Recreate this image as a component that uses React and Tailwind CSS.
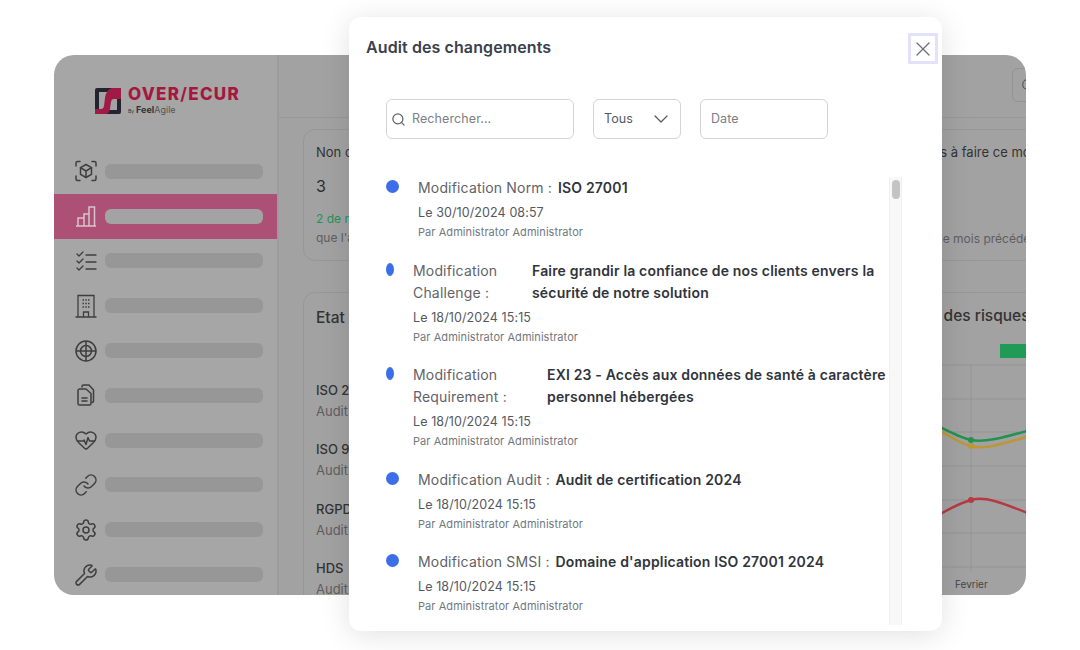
import { ChevronDown, HeartPulse, Link, Search, Settings, Wrench, X } from 'lucide-react';

const ScanBoxIcon = () => (
  <svg width="24" height="24" viewBox="0 0 24 24" fill="none" stroke="currentColor" strokeWidth="1.5" strokeLinecap="round" strokeLinejoin="round">
    <path d="M2 7V4a1.5 1.5 0 0 1 1.5-1.5H6M18 2.500h2.500A1.500 1.500 0 0 1 22 4v3M22 17v3a1.500 1.500 0 0 1-1.500 1.500H18M6 21.500H3.500A1.500 1.500 0 0 1 2 20v-3" />
    <path d="M12 5.500l5.500 3.200v6.600L12 18.500l-5.500-3.200V8.700z" />
    <path d="M6.500 8.700L12 12l5.500-3.300M12 12v6.500" />
  </svg>
);

const BarsIcon = () => (
  <svg width="24" height="24" viewBox="0 0 24 24" fill="none" stroke="currentColor" strokeWidth="1.500">
    <path d="M2 22h20M4 22v-8h6v8M10 22v-12h5v12M15 22V3h5.500v19" />
  </svg>
);

const ChecksIcon = () => (
  <svg width="24" height="24" viewBox="0 0 24 24" fill="none" stroke="currentColor" strokeWidth="1.300" strokeLinecap="round" strokeLinejoin="round">
    <path d="M3 5l2 2 4-4M3 12l2 2 4-4M3 19l2 2 4-4" />
    <path d="M12 6h10M12 13h10M12 20h10" />
  </svg>
);

const BuildingIcon = () => (
  <svg width="24" height="24" viewBox="0 0 24 24" fill="none" stroke="currentColor" strokeWidth="1.300">
    <path d="M1.500 23h21M4 23V1.500h16V23M9.500 23v-5h5v5" />
    <path d="M8.500 6h1.500M11.300 6h1.500M14 6h1.500M8.500 9.500h1.500M11.300 9.500h1.500M14 9.500h1.500M8.500 13h1.500M11.300 13h1.500M14 13h1.500" />
  </svg>
);

const TargetIcon = () => (
  <svg width="24" height="24" viewBox="0 0 24 24" fill="none" stroke="currentColor" strokeWidth="1.500">
    <circle cx="12" cy="12" r="10" />
    <circle cx="12" cy="12" r="5.500" />
    <path d="M12 2v20M2 12h20" />
  </svg>
);

const FilesIcon = () => (
  <svg width="24" height="24" viewBox="0 0 24 24" fill="none" stroke="currentColor" strokeWidth="1.500" strokeLinejoin="round" strokeLinecap="round">
    <path d="M8 4V3.500A1.500 1.500 0 0 1 9.500 2H15l4.500 5v11a1.500 1.500 0 0 1-1.500 1.500" />
    <path d="M4 7.500A1.500 1.500 0 0 1 5.500 6H12l5 4.500v10a1.500 1.500 0 0 1-1.500 1.500h-10A1.500 1.500 0 0 1 4 20.500z" />
    <path d="M8 15h5M8 18h5" />
  </svg>
);

const sidebarIcons = [
  <ScanBoxIcon />,
  <BarsIcon />,
  <ChecksIcon />,
  <BuildingIcon />,
  <TargetIcon />,
  <FilesIcon />,
  <HeartPulse size={24} strokeWidth={1.5} />,
  <Link size={24} strokeWidth={1.5} />,
  <Settings size={24} strokeWidth={1.5} />,
  <Wrench size={24} strokeWidth={1.5} />,
];

const Logo = () => (
  <div className="flex items-center gap-[7px] pl-[41px] h-[94px] pb-[3px]">
    <svg width="26" height="26" viewBox="0 0 26 26">
      <rect width="26" height="26" rx="2" fill="#23242f" />
      <rect x="4" y="4" width="18" height="18" fill="#a3a3a3" />
      <path d="M26 0v11h-7c-2 0-2.500 1-3 3l-1 7c-.5 3-2 5-5 5H0v-5h6c2 0 2.500-1 3-3l1-8c.5-4 3-10 8-10z" fill="#a11a47" />
    </svg>
    <div className="flex flex-col pt-[1px]">
      <div className="text-[17px] leading-[17px] font-extrabold text-[#a5173f] tracking-[1.300px] font-['Inter',sans-serif]">
        OVER<span className="font-bold">/</span>ECUR
      </div>
      <div className="flex items-baseline text-[9px] leading-[11px] text-[#333] mt-[1px]">
        <span className="text-[5px] mr-[2px]">By</span>
        <span className="font-bold">Feel</span>
        <span className="text-[#555]">Agile</span>
      </div>
    </div>
  </div>
);

const Sidebar = () => (
  <div className="w-[225px] shrink-0 bg-[#a6a6a6] border-r-2 border-[#9c9c9c]">
    <Logo />
    {sidebarIcons.map((icon, i) => (
      <div key={i} className={`flex items-center h-[44.800px] pl-[20px] text-[#3e3e3e] ${i === 1 ? 'bg-[#ad5075] text-[#d9c3cc]' : ''}`}>
        <div className="w-[24px] flex justify-center">{icon}</div>
        <div className={`ml-[7px] w-[158px] h-[15px] rounded-md ${i === 1 ? 'bg-[#a3a3a3]' : 'bg-[#979797]'}`} />
      </div>
    ))}
  </div>
);

const audits = [
  { name: 'ISO 27001', mt: 'mt-[54px]' },
  { name: 'ISO 9001', mt: 'mt-[22.300px]' },
  { name: 'RGPD', mt: 'mt-[22.300px]' },
  { name: 'HDS', mt: 'mt-[22.300px]' },
];

const RiskChart = () => (
  <svg width="143" height="220" viewBox="883 361 143 220" className="absolute left-[24px] top-[68px]">
    {[365, 399, 432, 466, 500, 533, 567].map((y) => (
      <line key={y} x1="883" x2="1026" y1={y} y2={y} stroke="#949494" strokeWidth="1" />
    ))}
    <line x1="971" x2="971" y1="365" y2="572" stroke="#949494" strokeWidth="1" />
    <path d="M930 422C950 432 960 438 971 440C985 443 1005 437 1030 430" fill="none" stroke="#22934f" strokeWidth="2.500" />
    <path d="M930 425C950 436 960 444 971 446C985 450 1005 443 1030 436" fill="none" stroke="#bd9638" strokeWidth="2.500" />
    <path d="M930 520C950 508 960 503 971 500C985 496 1000 502 1030 514" fill="none" stroke="#b53a41" strokeWidth="2.500" />
    <circle cx="971" cy="440" r="3" fill="#22934f" />
    <circle cx="971" cy="446" r="3" fill="#bd9638" />
    <circle cx="971" cy="500" r="3" fill="#b53a41" />
  </svg>
);

const Main = () => (
  <div className="flex-1 min-w-0 overflow-hidden bg-[#a2a2a2] font-['Inter',sans-serif]">
    <div className="h-[63px] border-b border-[#979797] flex justify-end overflow-hidden">
      <div className="ml-auto mt-[13px] mr-[-60px] w-[74px] h-[34px] rounded-md border border-[#939393] flex items-center pl-[8px]">
        <Search size={14} className="text-[#555]" />
      </div>
    </div>
    <div className="flex gap-[20px] pl-[24px] pt-[11px] w-[1000px]">
      <div className="w-[563px] h-[132px] shrink-0 rounded-xl border border-[#979797] px-[12px] pt-[14px]">
        <div className="text-[13px] leading-[17px] text-[#333]">Non conformités</div>
        <div className="text-[16px] leading-[20px] text-[#2c2c2c] mt-[15px]">3</div>
        <div className="text-[12px] leading-[17px] text-[#1f9355] mt-[14px]">2 de retard</div>
        <div className="text-[12px] leading-[17px] text-[#5e5e5e] mt-[2px]">que l'audit</div>
      </div>
      <div className="w-[300px] h-[132px] shrink-0 rounded-xl border border-[#979797] pl-[14px] pt-[14px]">
        <div className="text-[13px] leading-[17px] text-[#333]">Actions à faire ce mois</div>
        <div className="ml-[14px] text-[12px] leading-[17px] text-[#5e5e5e] mt-[69px]">que le mois précédent</div>
      </div>
    </div>
    <div className="flex gap-[20px] pl-[24px] pt-[31px] w-[1000px]">
      <div className="w-[535px] h-[320px] shrink-0 rounded-xl border border-[#979797] px-[12px] pt-[15px]">
        <div className="text-[15.500px] leading-[20px] font-medium text-[#333]">Etat des</div>
        {audits.map((a) => (
          <div key={a.name} className={a.mt}>
            <div className="text-[13px] leading-[16px] font-medium text-[#333]">{a.name}</div>
            <div className="text-[13px] leading-[16px] text-[#5e5e5e] mt-[5px]">Audit</div>
          </div>
        ))}
      </div>
      <div className="relative w-[300px] h-[320px] shrink-0 rounded-xl border border-[#979797] pl-[12px] pt-[13px]">
        <div className="text-[15.500px] leading-[20px] font-medium text-[#333]">Evolution des risques</div>
        <div className="absolute left-[141px] top-[51px] w-[60px] h-[14px] bg-[#1f9a57]" />
        <RiskChart />
        <div className="absolute left-[96px] top-[284px] text-[10px] leading-[14px] text-[#444]">Fevrier</div>
      </div>
    </div>
  </div>
);

const changes = [
  { dot: 'w-[13px]', label: 'Modification Norm :', labelW: 'w-[140px]', value: 'ISO 27001', date: 'Le 30/10/2024 08:57' },
  { dot: 'w-[8px]', label: 'Modification Challenge :', labelW: 'w-[119px]', value: 'Faire grandir la confiance de nos clients envers la sécurité de notre solution', date: 'Le 18/10/2024 15:15' },
  { dot: 'w-[8px]', label: 'Modification Requirement :', labelW: 'w-[134px]', value: 'EXI 23 - Accès aux données de santé à caractère personnel hébergées', date: 'Le 18/10/2024 15:15' },
  { dot: 'w-[13px]', label: 'Modification Audit :', labelW: 'w-[137.500px]', value: 'Audit de certification 2024', date: 'Le 18/10/2024 15:15' },
  { dot: 'w-[13px]', label: 'Modification SMSI :', labelW: 'w-[137.500px]', value: "Domaine d'application ISO 27001 2024", date: 'Le 18/10/2024 15:15' },
];

const ChangeItem = ({ item }) => (
  <div className="flex">
    <div className={`${item.dot} h-[13px] mt-[3px] rounded-[50%] bg-[#3b6ee8] shrink-0`} />
    <div className="ml-[19px] flex-1 min-w-0">
      <div className="flex text-[14px] leading-[22px] tracking-[0.17px]">
        <div className={`${item.labelW} shrink-0 text-[#5f6368]`}>{item.label}</div>
        <div className="font-semibold text-[#30343c]">{item.value}</div>
      </div>
      <div className="text-[12.500px] leading-[20px] tracking-[0.1px] text-[#55595f] mt-[4px]">{item.date}</div>
      <div className="text-[11px] leading-[16px] tracking-[0.065px] text-[#73777d] mt-[1px]">Par Administrator Administrator</div>
    </div>
  </div>
);

const AuditModal = () => (
  <div className="absolute left-[349px] top-[17px] w-[593px] h-[614px] flex flex-col rounded-xl bg-white shadow-[0_4px_30px_rgba(0,0,0,0.12)] font-['Inter',sans-serif]">
    <div className="flex items-start justify-between pl-[17px] pr-[4px] pt-[16px]">
      <div className="text-[16px] leading-[28px] tracking-[0.1px] font-semibold text-[#3b404d]">Audit des changements</div>
      <button className="w-[30px] h-[31px] flex items-center justify-center border-[3px] border-[#e4e1fa] text-[#6b7076]">
        <X size={24} strokeWidth={1.300} className="shrink-0" />
      </button>
    </div>
    <div className="flex gap-[19px] pl-[37px] mt-[35px] text-[12.500px] tracking-[0.1px]">
      <div className="w-[188px] h-[40px] flex items-center gap-[6px] pl-[4px] rounded-md border border-[#d4d4d6] text-[#7c8086]">
        <Search size={15} className="text-[#5f6368]" />
        Rechercher...
      </div>
      <div className="w-[88px] h-[40px] flex items-center justify-between pl-[10px] pr-[7px] rounded-md border border-[#d4d4d6] text-[#55595f]">
        Tous
        <ChevronDown size={24} strokeWidth={1.200} />
      </div>
      <div className="w-[128px] h-[40px] flex items-center pl-[10px] rounded-md border border-[#d4d4d6] text-[#7c8086]">Date</div>
    </div>
    <div className="flex pl-[37px] pr-[40px] mt-[38px] h-[448px]">
      <div className="flex-1 min-w-0 flex flex-col gap-[19.600px] overflow-hidden">
        {changes.map((c) => (
          <ChangeItem key={c.label} item={c} />
        ))}
      </div>
      <div className="w-[13px] shrink-0 bg-[#f8f8f8] border-x border-[#f0f0f0] pt-[3px] flex justify-center">
        <div className="w-[8px] h-[19px] rounded-full bg-[#c4c4c6]" />
      </div>
    </div>
  </div>
);

export default function App() {
  return (
    <div className="relative w-[1080px] h-[650px] overflow-hidden bg-white pt-[55px] pl-[54px] font-['Inter',sans-serif]">
      <div className="flex w-[972px] h-[540px] rounded-[20px] overflow-hidden">
        <Sidebar />
        <Main />
      </div>
      <AuditModal />
    </div>
  );
}
